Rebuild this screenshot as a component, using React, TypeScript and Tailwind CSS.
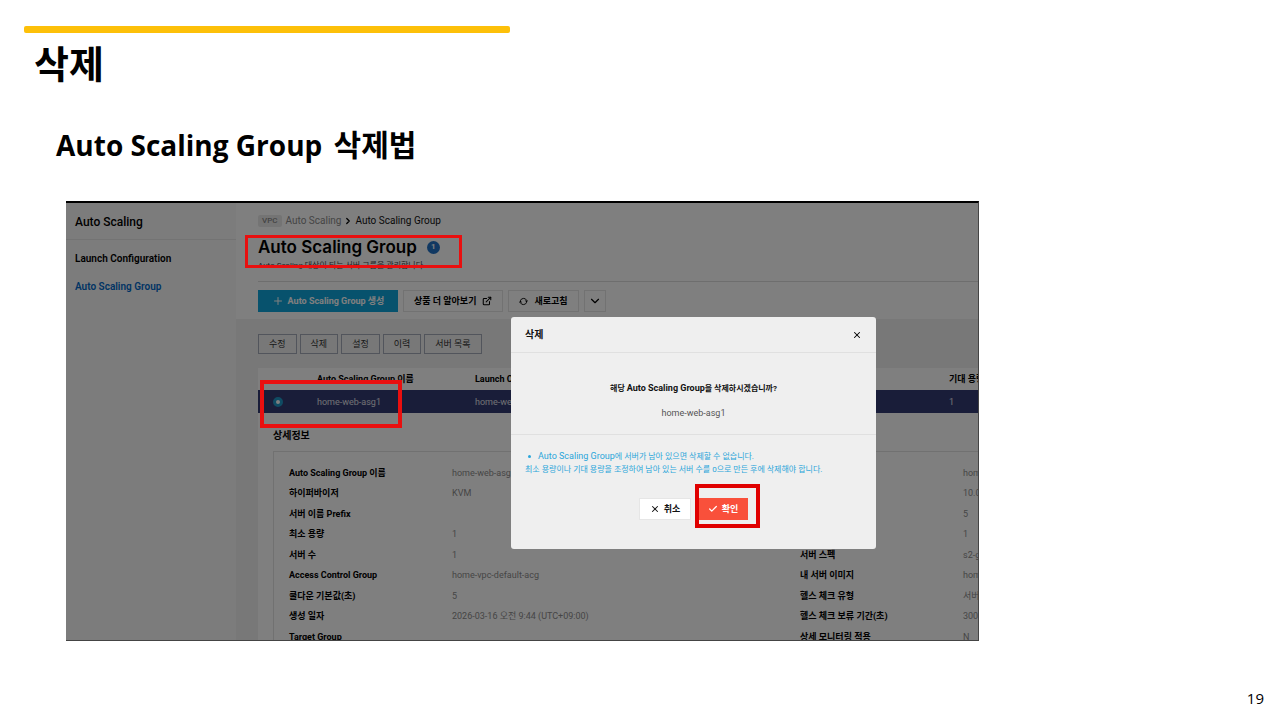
import type { ReactNode } from 'react';
import { Check, ChevronDown, ChevronRight, ExternalLink, Plus, X } from 'lucide-react';

const ACTIONS = ['수정', '삭제', '설정', '이력', '서버 목록'];

type Detail = { label: string; value: string };

const LEFT_DETAILS: Detail[] = [
  { label: 'Auto Scaling Group 이름', value: 'home-web-asg1' },
  { label: '하이퍼바이저', value: 'KVM' },
  { label: '서버 이름 Prefix', value: '' },
  { label: '최소 용량', value: '1' },
  { label: '서버 수', value: '1' },
  { label: 'Access Control Group', value: 'home-vpc-default-acg' },
  { label: '쿨다운 기본값(초)', value: '5' },
  { label: '생성 일자', value: '2026-03-16 오전 9:44 (UTC+09:00)' },
  { label: 'Target Group', value: '' },
];

const RIGHT_DETAILS: Detail[] = [
  { label: '', value: 'home' },
  { label: '', value: '10.0.' },
  { label: '', value: '5' },
  { label: '', value: '1' },
  { label: '서버 스펙', value: 's2-g3' },
  { label: '내 서버 이미지', value: 'home' },
  { label: '헬스 체크 유형', value: '서버' },
  { label: '헬스 체크 보류 기간(초)', value: '300' },
  { label: '상세 모니터링 적용', value: 'N' },
];

function RefreshIcon() {
  return (
    <svg viewBox="0 0 20 20" className="size-[9px]" fill="none" stroke="currentColor" strokeWidth="2">
      <path d="M3 8.500a7.500 7.500 0 0 1 14-1M17 11.500a7.500 7.500 0 0 1-14 1" />
      <path d="M13 8h7l-3 4z M7 12H0l3-4z" fill="currentColor" stroke="none" />
    </svg>
  );
}

function DetailList({ items }: { items: Detail[] }) {
  return (
    <dl className="w-[511px] shrink-0">
      {items.map((item, i) => (
        <div key={i} className="flex items-start pt-0.5 odd:h-5 even:h-[21px] last:-mb-[7px]">
          <dt className="w-[163px] shrink-0 font-bold text-black">{item.label}</dt>
          <dd className="text-[#8c8c8c]">{item.value}</dd>
        </div>
      ))}
    </dl>
  );
}

function ToolButton({ children }: { children: ReactNode }) {
  return (
    <button className="flex h-[22px] shrink-0 items-center justify-center gap-1.5 border border-[#e4e4e4] px-2.5 font-bold text-black">
      {children}
    </button>
  );
}

function Sidebar() {
  return (
    <aside className="w-[170px] shrink-0 bg-[#f9f9f9] text-[10px] leading-4 font-semibold text-black">
      <h3 className="flex h-[37px] items-center border-b border-[#e6e6e6] px-[9px] pt-0.5 text-xs font-medium">Auto Scaling</h3>
      <nav className="flex flex-col gap-3 px-[9px] pt-[11px]">
        <a href="#launch">Launch Configuration</a>
        <a href="#group" className="text-[#0068c8]">Auto Scaling Group</a>
      </nav>
    </aside>
  );
}

function PageHeader() {
  return (
    <header className="pt-2 pl-[22px]">
      <div className="flex h-5 items-center gap-1 text-[#8a8a8a]">
        <span className="rounded-xs bg-[#e9e9e9] px-1 text-[8px] leading-3 font-medium">VPC</span>
        <a href="#auto-scaling" className="text-[10px]">Auto Scaling</a>
        <ChevronRight className="-mx-0.5 size-2.5 text-black" strokeWidth={3} />
        <span className="text-[10px] text-[#111]">Auto Scaling Group</span>
      </div>
      <div className="mt-1.5 flex h-5 w-fit items-center gap-2.5">
        <h3 className="font-['Inter'] text-[17px] leading-5 font-semibold text-black">Auto Scaling Group</h3>
        <span className="flex size-[13px] items-center justify-center rounded-full bg-[#2170c4] text-[8px] font-bold text-white">1</span>
      </div>
      <p className="h-4 text-[8px] leading-[18px] text-[#444]">Auto Scaling 대상이 되는 서버 그룹을 관리합니다.</p>
      <div className="mt-2 flex gap-[5px] border-t border-[#dcdcdc] pt-2 pb-[7px]">
        <button className="flex h-[22px] w-[140px] shrink-0 items-center justify-center gap-1 bg-[#0fa5da] font-bold text-white">
          <Plus className="size-3" strokeWidth={2} />
          Auto Scaling Group 생성
        </button>
        <ToolButton>
          상품 더 알아보기
          <ExternalLink className="size-2.5" strokeWidth={2.5} />
        </ToolButton>
        <ToolButton>
          <RefreshIcon />
          새로고침
        </ToolButton>
        <button aria-label="더보기" className="flex h-[22px] w-[22px] shrink-0 items-center justify-center border border-[#e4e4e4] text-black">
          <ChevronDown className="size-3.5" strokeWidth={2} />
        </button>
      </div>
    </header>
  );
}

function GroupTable() {
  return (
    <table className="w-[800px] table-fixed border-collapse text-left">
      <thead>
        <tr className="h-[22px] text-black">
          <th className="w-[59px]" />
          <th className="w-[158px] font-bold">Auto Scaling Group 이름</th>
          <th className="w-[474px] font-bold">Launch Configuration</th>
          <th className="font-bold">기대 용량</th>
        </tr>
      </thead>
      <tbody>
        <tr className="h-[23px] bg-[#323a72] text-[#e0e0e8]">
          <td className="pl-[15px]">
            <input
              type="radio"
              name="group"
              defaultChecked
              aria-label="home-web-asg1"
              className="block size-2.5 appearance-none rounded-full border-3 border-[#1f97c6] bg-white"
            />
          </td>
          <td>home-web-asg1</td>
          <td>home-web-lc1</td>
          <td>1</td>
        </tr>
      </tbody>
    </table>
  );
}

function DeleteDialog() {
  return (
    <section
      role="dialog"
      aria-labelledby="delete-title"
      className="absolute top-[114px] left-[445px] w-[365px] rounded-[3px] bg-[#efefef] pb-[29px]"
    >
      <div className="flex h-9 items-center justify-between border-b border-[#e0e0e0] px-3.5">
        <h4 id="delete-title" className="text-[10px] font-bold text-[#111]">삭제</h4>
        <button aria-label="닫기">
          <X className="size-2.5 text-black" strokeWidth={2.5} />
        </button>
      </div>
      <div className="flex h-[82px] flex-col items-center gap-2 border-b border-[#e0e0e0] pt-[27px]">
        <p className="text-[8px] leading-4 font-bold text-[#111]">
          해당 <span className="text-[9px]">Auto Scaling Group</span>을 삭제하시겠습니까?
        </p>
        <p className="leading-4 text-[#555]">home-web-asg1</p>
      </div>
      <div className="px-3.5 pt-[15px] text-[8px] leading-[13px] text-[#2ba6da]">
        <p className="flex items-center gap-[7px] pl-[3px]">
          <span className="size-[3px] rounded-full bg-[#2ba6da]" />
          <span>
            <span className="text-[9px]">Auto Scaling Group</span>에 서버가 남아 있으면 삭제할 수 없습니다.
          </span>
        </p>
        <p>최소 용량이나 기대 용량을 조정하여 남아 있는 서버 수를 0으로 만든 후에 삭제해야 합니다.</p>
      </div>
      <div className="mt-[22px] flex justify-center gap-[7px]">
        <button className="flex h-[22px] w-[52px] items-center justify-center gap-1 border border-[#e6e6e6] bg-white font-bold text-[#111]">
          <X className="size-2.5" strokeWidth={2.5} />
          취소
        </button>
        <div className="relative">
          <button className="flex h-[22px] w-[50px] items-center justify-center gap-1 bg-[#f9503b] font-bold text-white">
            <Check className="size-2.5" strokeWidth={3} />
            확인
          </button>
          <span className="absolute -top-3.5 -right-3 -left-[3px] h-11 border-4 border-[#e00000]" />
        </div>
      </div>
    </section>
  );
}

function Console() {
  return (
    <figure className="relative overflow-hidden border-t-2 border-r border-b border-t-black border-r-[#444] border-b-[#444] bg-white font-['Roboto','Noto_Sans_CJK_KR',sans-serif] text-[9px] leading-4">
      <div className="flex">
        <Sidebar />
        <div className="min-w-0 flex-1">
          <PageHeader />
          <div className="bg-[#f0f0f0] pt-[15px] pl-[22px]">
            <div className="flex gap-[3px]">
              {ACTIONS.map((action) => (
                <button key={action} className="h-5 border border-[#a4abb8] px-2.5 leading-[18px] text-[#333]">
                  {action}
                </button>
              ))}
            </div>
            <div className="mt-3.5 overflow-hidden bg-white">
              <GroupTable />
              <div className="pt-[15px] pl-[15px]">
                <h4 className="text-[10px] leading-4 font-bold text-black">상세정보</h4>
                <div className="mt-[7px] flex border-t border-l border-[#e2e2e2] pt-[11px] pl-[15px]">
                  <DetailList items={LEFT_DETAILS} />
                  <DetailList items={RIGHT_DETAILS} />
                </div>
              </div>
            </div>
          </div>
        </div>
      </div>
      <div className="absolute inset-0 bg-black/50" />
      <span className="absolute top-8 left-[179px] h-[33px] w-[217px] border-3 border-[#e90f0f]" />
      <span className="absolute top-[177px] left-[194px] h-12 w-[142px] border-4 border-[#e90f0f]" />
      <DeleteDialog />
    </figure>
  );
}

export default function App() {
  return (
    <main className="flex min-h-screen flex-col bg-white font-['Open_Sans','Noto_Sans_CJK_KR',sans-serif] text-black">
      <div className="mt-[26px] ml-6 h-[7px] w-[38%] rounded-xs bg-[#fdc009]" />
      <h1 className="mt-2 ml-[34px] text-[38px] leading-[44px] font-bold">삭제</h1>
      <h2 className="mt-10 ml-14 text-[28px] leading-10 font-bold">
        Auto Scaling Group <span className="ml-1 text-[30px]">삭제법</span>
      </h2>
      <div className="mt-9 mr-[301px] ml-[66px]">
        <Console />
      </div>
      <footer className="mt-auto pr-4 pb-2.5 text-right text-[15px] leading-6">19</footer>
    </main>
  );
}
